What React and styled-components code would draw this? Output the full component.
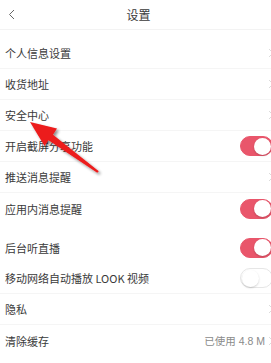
import React from "react";
import styled, { createGlobalStyle } from "styled-components";

const Global = createGlobalStyle`
  html, body { margin: 0; padding: 0; background: #fff; overflow: hidden; }
  body { font-family: "Noto Sans CJK SC", "Liberation Sans", sans-serif; }
`;

const Viewport = styled.div`
  width: 271px;
  height: 363px;
  overflow: hidden;
  position: relative;
  background: #fff;
`;

const Page = styled.div`
  width: 277px;
  display: flex;
  flex-direction: column;
`;

const Header = styled.div`
  height: 29px;
  border-bottom: 1px solid #f3f3f3;
  display: grid;
  grid-template-columns: 40px 1fr 40px;
  align-items: center;
`;

const Back = styled.div`
  padding-left: 8px;
  display: flex;
  align-items: center;
  height: 100%;
`;

const Title = styled.div`
  text-align: center;
  font-size: 12px;
  color: #3a3a3a;
`;

const Group = styled.div`
  margin-top: ${(p) => p.$gap}px;
  display: flex;
  flex-direction: column;
`;

const Row = styled.div`
  height: 31px;
  box-sizing: border-box;
  padding: 0 3px 0 5px;
  display: flex;
  align-items: center;
  justify-content: space-between;
  border-bottom: ${(p) => (p.$line ? "1px solid #f5f5f5" : "none")};
`;

const Label = styled.span`
  font-size: 11px;
  color: #3a3a3a;
`;

const Right = styled.div`
  display: flex;
  align-items: center;
  gap: 3px;
`;

const Value = styled.span`
  font-size: 10.5px;
  color: #8a8a8a;
  font-family: "Liberation Sans", "Noto Sans CJK SC", sans-serif;
`;

const Switch = styled.div`
  width: 33px;
  height: 20px;
  border-radius: 10px;
  box-sizing: border-box;
  background: ${(p) => (p.$on ? "#e9566b" : "#fff")};
  border: 1px solid ${(p) => (p.$on ? "#e9566b" : "#e6e6e6")};
  display: flex;
  align-items: center;
  justify-content: ${(p) => (p.$on ? "flex-end" : "flex-start")};
  padding: 0 1px;
  margin-right: 1px;
`;

const Knob = styled.div`
  width: 17px;
  height: 17px;
  border-radius: 50%;
  background: #fff;
  box-shadow: 0 1px 2px rgba(0, 0, 0, 0.18);
`;

const ArrowLayer = styled.svg`
  position: absolute;
  left: 0;
  top: 0;
  pointer-events: none;
`;

const Chevron = () => (
  <svg width="6" height="10" viewBox="0 0 6 10">
    <path d="M1 1 L5 5 L1 9" fill="none" stroke="#dcdcdc" strokeWidth="1" />
  </svg>
);

const Item = ({ label, toggle, value, line }) => (
  <Row $line={line}>
    <Label>{label}</Label>
    <Right>
      {value && <Value>{value}</Value>}
      {toggle === undefined ? (
        <Chevron />
      ) : (
        <Switch $on={toggle}>
          <Knob />
        </Switch>
      )}
    </Right>
  </Row>
);

export default function App() {
  return (
    <Viewport>
      <Global />
      <Page>
        <Header>
          <Back>
            <svg width="7" height="11" viewBox="0 0 7 11">
              <path d="M6 1 L1.5 5.5 L6 10" fill="none" stroke="#666" strokeWidth="1" />
            </svg>
          </Back>
          <Title>设置</Title>
          <div />
        </Header>
        <Group $gap={8}>
          <Item label="个人信息设置" line />
          <Item label="收货地址" line />
          <Item label="安全中心" line />
          <Item label="开启截屏分享功能" toggle={true} line />
          <Item label="推送消息提醒" line />
          <Item label="应用内消息提醒" toggle={true} />
        </Group>
        <Group $gap={8}>
          <Item label="后台听直播" toggle={true} />
          <Item label="移动网络自动播放 LOOK 视频" toggle={false} line />
          <Item label="隐私" line />
          <Item label="清除缓存" value="已使用 4.8 M" />
        </Group>
      </Page>
      <ArrowLayer width="271" height="363" viewBox="0 0 271 363">
        <defs>
          <filter id="sh" x="-20%" y="-20%" width="140%" height="140%">
            <feGaussianBlur in="SourceAlpha" stdDeviation="1.5" />
            <feOffset dx="1.5" dy="1.5" result="b" />
            <feComponentTransfer>
              <feFuncA type="linear" slope="0.45" />
            </feComponentTransfer>
            <feMerge>
              <feMergeNode />
              <feMergeNode in="SourceGraphic" />
            </feMerge>
          </filter>
        </defs>
        <polygon
          points="30,122 57,128.5 53,134.8 98.8,171.2 97.2,172.8 48.5,140.2 44.5,146"
          fill="#ec1c1c"
          filter="url(#sh)"
        />
      </ArrowLayer>
    </Viewport>
  );
}
